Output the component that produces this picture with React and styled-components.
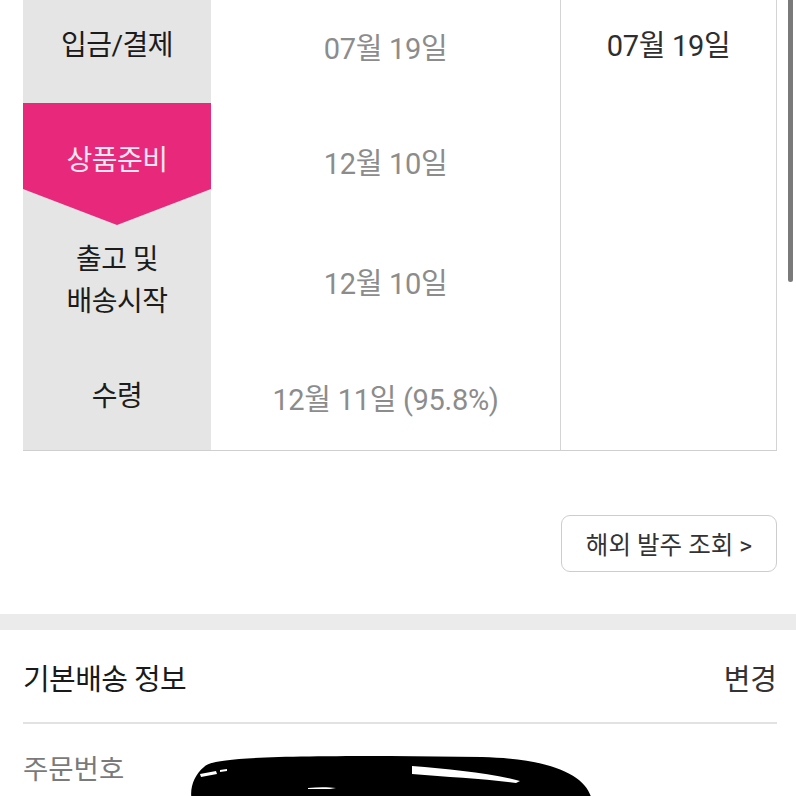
import React from 'react'
import styled, { createGlobalStyle } from 'styled-components'

const steps = [
  { label: ['입금/결제'], date: '07월 19일' },
  { label: ['상품준비'], date: '12월 10일', active: true },
  { label: ['출고 및', '배송시작'], date: '12월 10일' },
  { label: ['수령'], date: '12월 11일 (95.8%)' },
]

const App = () => {
  return (
    <>
      <GlobalStyle />
      <Page>
        <StatusTable>
          {steps.map((s, i) => (
            <React.Fragment key={i}>
              <LabelCell $row={i + 1} $active={s.active}>
                <LabelText $active={s.active}>
                  {s.label.map((l) => <span key={l}>{l}</span>)}
                </LabelText>
              </LabelCell>
              <DateCell $row={i + 1}>{s.date}</DateCell>
            </React.Fragment>
          ))}
          <ActualCol>07월 19일</ActualCol>
        </StatusTable>

        <ButtonRow>
          <OutlineButton>해외 발주 조회 &gt;</OutlineButton>
        </ButtonRow>

        <Band />

        <Section>
          <SectionHeader>
            <SectionTitle>기본배송 정보</SectionTitle>
            <EditLink>변경</EditLink>
          </SectionHeader>
          <Divider />
          <InfoRow>
            <InfoLabel>주문번호</InfoLabel>
            <Redaction viewBox="0 0 404 46" width="404" height="46">
              <path d="M14 12 C22 3 70 1 200 1 L292 2 C366 4 398 22 402 46 L2 46 C-1 34 4 20 14 12 Z" fill="#000" />
              <path d="M10 19 L26 16 L27 19 L11 22 Z" fill="#fff" />
              <path d="M30 15 L37 14 L37 16 L30 17 Z" fill="#fff" />
              <path d="M222 11 C260 14 300 18 330 26 L326 28 C296 24 258 22 222 19 Z" fill="#fff" />
              <path d="M118 33 C128 32 138 32 146 33 L140 34 C132 34 124 34 118 34 Z" fill="#fff" />
            </Redaction>
          </InfoRow>
        </Section>

        <ScrollThumb />
      </Page>
    </>
  )
}

const GlobalStyle = createGlobalStyle`
  html, body {
    margin: 0;
    padding: 0;
    background: #fff;
  }
  body {
    font-family: Roboto, "Noto Sans CJK KR", sans-serif;
  }
`

const Page = styled.div`
  position: relative;
  width: 796px;
  height: 796px;
  overflow: hidden;
  background: #fff;
`

const StatusTable = styled.div`
  display: grid;
  grid-template-columns: 188px 349px 1fr;
  grid-template-rows: 115px 115px 125px 107px;
  margin: -12px 19px 0 23px;
  border-right: 1px solid #d4d4d4;
  border-bottom: 1px solid #cfcfcf;
`

const LabelCell = styled.div`
  grid-column: 1;
  grid-row: ${(p) => p.$row};
  position: relative;
  display: flex;
  align-items: center;
  justify-content: center;
  background: #e5e5e5;

  ${(p) => p.$active && `
    &::before {
      content: '';
      position: absolute;
      top: 0;
      left: 0;
      right: 0;
      height: 122px;
      background: #e8297b;
      clip-path: polygon(0 0, 100% 0, 100% 86px, 50% 122px, 0 86px);
      z-index: 1;
    }
  `}
`

const LabelText = styled.div`
  position: relative;
  z-index: 2;
  display: flex;
  flex-direction: column;
  align-items: center;
  font-size: 28px;
  line-height: 42px;
  letter-spacing: -0.5px;
  color: ${(p) => (p.$active ? '#ffe6f1' : '#1c1c1c')};
`

const DateCell = styled.div`
  grid-column: 2;
  grid-row: ${(p) => p.$row};
  display: flex;
  align-items: center;
  justify-content: center;
  font-size: 29px;
  color: #8c8c8c;
  letter-spacing: -0.3px;
`

const ActualCol = styled.div`
  grid-column: 3;
  grid-row: 1 / 5;
  border-left: 1px solid #d4d4d4;
  text-align: center;
  padding-top: 40px;
  font-size: 29px;
  line-height: 36px;
  color: #2e2e2e;
  letter-spacing: -0.3px;
`

const ButtonRow = styled.div`
  display: flex;
  justify-content: flex-end;
  padding: 64px 19px 42px 23px;
`

const OutlineButton = styled.button`
  width: 216px;
  height: 57px;
  border: 1px solid #cdcdcd;
  border-radius: 9px;
  background: #fff;
  font-family: Roboto, "Noto Sans CJK KR", sans-serif;
  font-size: 24.5px;
  color: #333;
  cursor: pointer;
`

const Band = styled.div`
  height: 16px;
  background: #ebebeb;
`

const Section = styled.div`
  padding: 0 19px 0 23px;
`

const SectionHeader = styled.div`
  display: flex;
  justify-content: space-between;
  align-items: center;
  padding: 30px 0 22px;
  line-height: 40px;
`

const SectionTitle = styled.div`
  font-size: 29px;
  color: #1a1a1a;
  letter-spacing: -0.6px;
`

const EditLink = styled.div`
  font-size: 29px;
  color: #333;
`

const Divider = styled.div`
  height: 2px;
  background: #e2e2e2;
`

const InfoRow = styled.div`
  display: flex;
  align-items: flex-start;
  gap: 66px;
  padding-top: 28px;
`

const InfoLabel = styled.div`
  font-size: 27.5px;
  line-height: 36px;
  color: #7a7a7a;
`

const Redaction = styled.svg`
  display: block;
  margin-top: 3px;
  flex-shrink: 0;
`

const ScrollThumb = styled.div`
  position: absolute;
  top: 0;
  right: 3px;
  width: 5px;
  height: 282px;
  background: #7a7a7a;
  border-radius: 0 0 3px 3px;
`

export default App
